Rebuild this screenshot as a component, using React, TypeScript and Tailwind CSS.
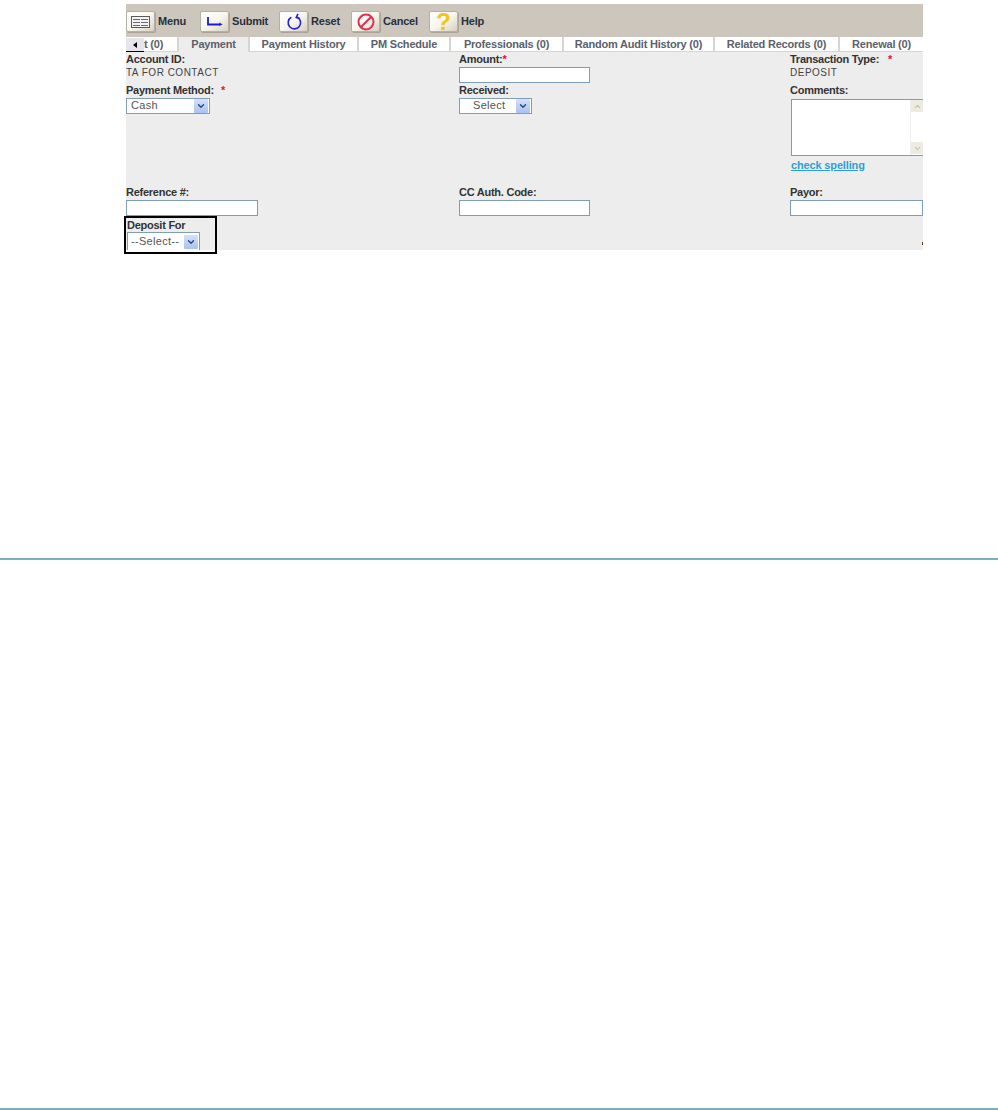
import React from "react";
import { ChevronDown, ChevronUp } from "lucide-react";

const font = { fontFamily: '"Liberation Sans", Arial, sans-serif' };

const tabs = [
  { name: "t (0)", width: "w-[53px]", place: "justify-start pl-[18px] bg-white" },
  { name: "Payment", width: "w-[71px]", place: "justify-center bg-[#ededed]", active: true },
  { name: "Payment History", width: "w-[109px]", place: "justify-center bg-white" },
  { name: "PM Schedule", width: "w-[92px]", place: "justify-center bg-white" },
  { name: "Professionals (0)", width: "w-[113px]", place: "justify-center bg-white" },
  { name: "Random Audit History (0)", width: "w-[151px]", place: "justify-center bg-white" },
  { name: "Related Records (0)", width: "w-[125px]", place: "justify-center bg-white" },
  { name: "Renewal (0)", width: "w-[83px]", place: "justify-center bg-white" },
];

const ToolButton = ({ label, children, width }: { label: string; children: React.ReactNode; width: string }) => (
  <div className={`flex items-center ${width}`}>
    <div className="flex h-[21px] w-[29px] items-center justify-center rounded-[2px] border border-[#b5b0a6] bg-gradient-to-br from-white via-[#f8f6ee] to-[#d6d0bf] shadow-[1px_1px_0_#a9a398]">
      {children}
    </div>
    <span className="ml-[3px] text-[11px] font-bold tracking-[-0.2px] text-[#27303c]">{label}</span>
  </div>
);

const Label = ({ children, star, gap }: { children: React.ReactNode; star?: boolean; gap?: string }) => (
  <div className="h-[13px] whitespace-nowrap text-[11px] leading-[13px] font-semibold tracking-[-0.25px] text-[#333]">
    {children}
    {star && <span className={`text-[#e0103c] ${gap ?? ""}`}>*</span>}
  </div>
);

const TextBox = ({ width }: { width: string }) => (
  <div className={`h-[16px] border border-[#7f9db9] bg-white ${width}`} />
);

const SelectBox = ({ text, width, indent }: { text: string; width: string; indent: string }) => (
  <div className={`flex items-center justify-between border-[#7f9db9] bg-white pr-[1px] ${width}`}>
    <span className={`pb-[1px] text-[11px] tracking-[0.3px] text-[#555] ${indent}`}>{text}</span>
    <div className="flex h-[14px] w-[14px] items-center justify-center rounded-[1px] bg-gradient-to-b from-[#d3e0fa] to-[#aac2f0]">
      <ChevronDown size={10} strokeWidth={3.5} className="text-[#2f4a80]" />
    </div>
  </div>
);

export default function App() {
  return (
    <div className="min-h-[1110px] bg-white pt-[4px]" style={font}>
      <div className="relative ml-[126px] h-[246px] w-[797px] bg-[#ededed]">
        {/* toolbar */}
        <div className="flex h-[33px] items-center bg-[#cdc6bd] pt-[2px]">
          <ToolButton label="Menu" width="w-[74px]">
            <svg width="19" height="12" viewBox="0 0 19 12">
              <rect x="0.5" y="0.5" width="18" height="11" fill="#f2f2f2" stroke="#5a5a5a" />
              <path d="M2 3.5h15M2 6.5h15M2 9.5h15" stroke="#6a6a6a" />
              <path d="M9.5 1v10" stroke="#f2f2f2" />
            </svg>
          </ToolButton>
          <ToolButton label="Submit" width="w-[79px]">
            <svg width="16" height="9" viewBox="0 0 16 9">
              <path d="M1 0v7.5h12" fill="none" stroke="#1a1ae0" strokeWidth="1.8" />
              <path d="M12.5 5.5l3 2-3 1.5z" fill="#1a1ae0" />
            </svg>
          </ToolButton>
          <ToolButton label="Reset" width="w-[72px]">
            <svg width="16" height="17" viewBox="0 0 18 18">
              <path d="M6 4.2A7 7 0 1 0 12.5 4" fill="none" stroke="#2222dd" strokeWidth="1.8" />
              <path d="M13.5 0.5l-2 4 4 1.2" fill="none" stroke="#2222dd" strokeWidth="1.8" />
            </svg>
          </ToolButton>
          <ToolButton label="Cancel" width="w-[78px]">
            <svg width="18" height="18" viewBox="0 0 18 18">
              <circle cx="9" cy="9" r="7.5" fill="none" stroke="#e0304f" strokeWidth="2" />
              <path d="M4 14L14 4" stroke="#e0304f" strokeWidth="2" />
            </svg>
          </ToolButton>
          <ToolButton label="Help" width="w-[70px]">
            <span className="text-[24px] leading-none font-bold text-[#f0c419]">?</span>
          </ToolButton>
        </div>

        {/* tabs */}
        <div className="flex h-[15px] items-stretch bg-[#d8d5cf]">
          {tabs.map((t, i) => (
            <div
              key={t.name}
              className={`flex shrink-0 items-center border-[#d8d5cf] text-[11px] font-semibold tracking-[-0.2px] whitespace-nowrap text-[#5c616a] ${t.width} ${t.place} ${i < tabs.length - 1 ? "border-r-2" : ""} ${t.active ? "" : "border-b"}`}
            >
              {t.name}
            </div>
          ))}
        </div>
        <div className="absolute top-[34px] left-0 flex h-[14px] w-[18px] items-center justify-center border-b border-black bg-[#e7e5ec]">
          <div className="h-0 w-0 border-y-[3px] border-r-[4px] border-y-transparent border-r-black" />
        </div>

        {/* form */}
        <div className="grid grid-cols-[333px_331px_133px] pt-[1px]">
          <div>
            <Label>Account ID:</Label>
            <div className="mt-[1px] text-[10px] leading-[12px] tracking-[0.5px] text-[#444]">TA FOR CONTACT</div>
            <div className="mt-[5px]">
              <Label star gap="ml-[7px]">Payment Method:</Label>
              <div className="mt-[1px]">
                <SelectBox text="Cash" width="h-[16px] w-[84px] border" indent="pl-[4px]" />
              </div>
            </div>
          </div>
          <div>
            <Label star>Amount:</Label>
            <div className="mt-[1px]">
              <TextBox width="w-[131px]" />
            </div>
            <div className="mt-[1px]">
              <Label>Received:</Label>
              <div className="mt-[1px]">
                <SelectBox text="Select" width="h-[16px] w-[73px] border" indent="pl-[13px]" />
              </div>
            </div>
          </div>
          <div>
            <Label star gap="ml-[9px]">Transaction Type:</Label>
            <div className="mt-[1px] text-[10px] leading-[12px] tracking-[0.5px] text-[#444]">DEPOSIT</div>
            <div className="mt-[5px]">
              <Label>Comments:</Label>
              <div className="mt-[2px] ml-[1px] flex h-[57px] w-[132px] justify-end overflow-hidden border-t border-b border-l border-[#7f9db9] bg-white">
                <div className="flex w-[13px] flex-col justify-between border-l border-[#eeeeee] pb-[1px]">
                  <div className="flex h-[12px] items-center justify-center bg-[#eeebe0]">
                    <ChevronUp size={9} strokeWidth={3} className="text-[#c5c2b8]" />
                  </div>
                  <div className="flex h-[12px] items-center justify-center bg-[#eeebe0]">
                    <ChevronDown size={9} strokeWidth={3} className="text-[#c5c2b8]" />
                  </div>
                </div>
              </div>
              <div className="mt-[2px] ml-[1px] text-[11px] leading-[14px] font-semibold tracking-[-0.15px] text-[#2d9fd8] underline">check spelling</div>
            </div>
          </div>
        </div>

        <div className="mt-[14px] grid grid-cols-[333px_331px_133px]">
          <div>
            <Label>Reference #:</Label>
            <div className="mt-[1px]">
              <TextBox width="w-[132px]" />
            </div>
          </div>
          <div>
            <Label>CC Auth. Code:</Label>
            <div className="mt-[1px]">
              <TextBox width="w-[131px]" />
            </div>
          </div>
          <div>
            <Label>Payor:</Label>
            <div className="mt-[1px]">
              <TextBox width="w-[133px]" />
            </div>
          </div>
        </div>

        <div className="-ml-[2px] h-[38px] w-[93px] border-2 border-black pt-[1px] pl-[1px]">
          <Label>Deposit For</Label>
          <SelectBox text="--Select--" width="h-[18px] w-[73px] border-x border-t" indent="pl-[3px]" />
        </div>

        <div className="absolute top-[238px] right-0 h-[3px] w-[1px] bg-[#5a3a20]" />
      </div>

      <div className="mt-[308px] h-[2px] bg-[#7aaebf]" />
      <div className="mt-[548px] h-[2px] bg-[#7aaebf]" />
    </div>
  );
}
